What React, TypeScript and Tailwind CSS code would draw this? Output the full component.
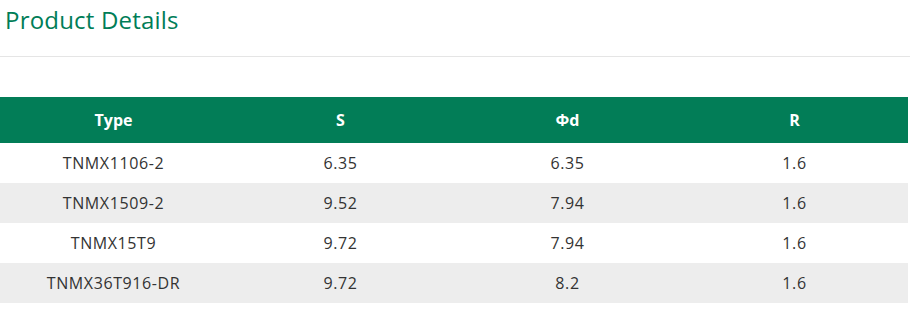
import React from 'react';

interface Row {
    type: string;
    s: string;
    d: string;
    r: string;
}

const rows: Row[] = [
    { type: 'TNMX1106-2', s: '6.35', d: '6.35', r: '1.6' },
    { type: 'TNMX1509-2', s: '9.52', d: '7.94', r: '1.6' },
    { type: 'TNMX15T9', s: '9.72', d: '7.94', r: '1.6' },
    { type: 'TNMX36T916-DR', s: '9.72', d: '8.2', r: '1.6' },
];

const App: React.FC = () => {
    return (
        <div className="w-[910px] h-[315px] bg-white font-['Open_Sans',sans-serif]">
            {/* Heading */}
            <div className="h-[57px] border-b border-[#e5e5e5] px-[5px] pt-[4px]">
                <h2 className="text-[24px] leading-[32px] text-[#007d57] tracking-[0.2px]">Product Details</h2>
            </div>

            {/* Spec table */}
            <div className="w-[908px] mt-[40px]">
                <div className="grid grid-cols-4 h-[46px] items-center bg-[#027d57] text-white font-bold text-[16px]">
                    <div className="text-center">Type</div>
                    <div className="text-center">S</div>
                    <div className="text-center">Φd</div>
                    <div className="text-center">R</div>
                </div>
                {rows.map((row, i) => (
                    <div
                        key={row.type}
                        className={`grid grid-cols-4 h-[40px] items-center text-[16px] tracking-[0.6px] text-[#333] ${i % 2 === 1 ? 'bg-[#ededed]' : 'bg-white'}`}
                    >
                        <div className="text-center">{row.type}</div>
                        <div className="text-center">{row.s}</div>
                        <div className="text-center">{row.d}</div>
                        <div className="text-center">{row.r}</div>
                    </div>
                ))}
            </div>
        </div>
    );
};

export default App;
